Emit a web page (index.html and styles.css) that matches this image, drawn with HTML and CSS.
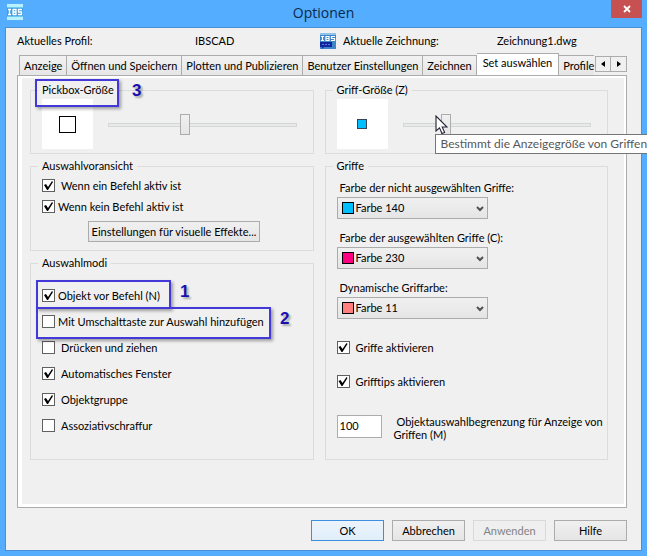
FILE: index.html
```html
<!DOCTYPE html>
<html lang="de">
<head>
<meta charset="utf-8">
<title>Optionen</title>
<link rel="stylesheet" href="styles.css">
</head>
<body>
<div class="window">
  <header class="titlebar">
    <svg class="app-icon" width="16" height="16" viewBox="0 0 16 16" aria-hidden="true">
      <rect width="16" height="16" fill="#3f9fe0"/>
      <rect width="16" height="3" fill="#b8f0fb"/>
      <rect y="3" width="16" height="1" fill="#6cc6ee"/>
      <rect y="12" width="16" height="1" fill="#6cc6ee"/>
      <rect y="13" width="16" height="3" fill="#b8f0fb"/>
      <path d="M1 5.500h3M2.500 5v6M1 10.500h3M6 5v6M6 5.500h3v2.500h-3M9 8v2.500h-3M15 5.500h-3.500v2.500h3v2.500h-3.500" fill="none" stroke="#fff" stroke-width="1.300"/>
    </svg>
    <h1 class="title">Optionen</h1>
    <button class="close" type="button" aria-label="Schließen">
      <svg width="8" height="8" viewBox="0 0 8 8"><path d="M1 1l6 6M7 1l-6 6" stroke="#fff" stroke-width="1.800"/></svg>
    </button>
  </header>

  <main class="client">
    <div class="info">
      <span>Aktuelles Profil:</span>
      <span>IBSCAD</span>
      <span class="drawing">
        <svg width="16" height="16" viewBox="0 0 16 16" aria-hidden="true">
          <rect width="16" height="16" fill="#3f86c9"/>
          <rect width="16" height="2" fill="#8fc4e8"/>
          <path d="M1 3.500h3M2.500 3v5M1 7.500h3M6 3v5M6 3.500h3v2h-3M9 5.500v2h-3M15 3.500h-3.500v2h3v2h-3.500" fill="none" stroke="#fff" stroke-width="1.200"/>
          <path d="M0 9h12v5h-8l-2 2v-2h-2z" fill="#1226a0"/>
          <path d="M2 11.500h2M5 11.500h2M8 11.500h2" stroke="#4f7fe0"/>
        </svg>
        Aktuelle Zeichnung:
      </span>
      <span>Zeichnung1.dwg</span>
    </div>

    <div class="tabs">
      <div class="tablist" role="tablist">
        <button class="tab" type="button" role="tab">Anzeige</button>
        <button class="tab" type="button" role="tab">Öffnen und Speichern</button>
        <button class="tab" type="button" role="tab">Plotten und Publizieren</button>
        <button class="tab" type="button" role="tab">Benutzer Einstellungen</button>
        <button class="tab" type="button" role="tab">Zeichnen</button>
        <button class="tab tab-active" type="button" role="tab" aria-selected="true">Set auswählen</button>
        <button class="tab tab-last" type="button" role="tab">Profile</button>
      </div>
      <button class="scroll" type="button" aria-label="Zurück"><svg width="4" height="6" viewBox="0 0 4 6"><path d="M4 0v6L0 3z"/></svg></button>
      <button class="scroll" type="button" aria-label="Weiter"><svg width="4" height="6" viewBox="0 0 4 6"><path d="M0 0v6l4-3z"/></svg></button>
    </div>

    <div class="panel" role="tabpanel">
      <div class="column">
        <fieldset class="group size-group">
          <legend>Pickbox-Größe</legend>
          <div class="preview"><div class="pickbox"></div></div>
          <div class="slider"><input type="range" min="0" max="100" value="40" aria-label="Pickbox-Größe"></div>
          <div class="callout callout-pickbox"><b>3</b></div>
        </fieldset>

        <fieldset class="group preview-group">
          <legend>Auswahlvoransicht</legend>
          <label class="check check-wide"><input type="checkbox" checked>Wenn ein Befehl aktiv ist</label>
          <label class="check"><input type="checkbox" checked>Wenn kein Befehl aktiv ist</label>
          <button class="button effects" type="button">Einstellungen für visuelle Effekte...</button>
        </fieldset>

        <fieldset class="group modes-group">
          <legend>Auswahlmodi</legend>
          <label class="check"><input type="checkbox" checked>Objekt vor Befehl (N)</label>
          <label class="check"><input type="checkbox">Mit Umschalttaste zur Auswahl hinzufügen</label>
          <label class="check check-wide"><input type="checkbox">Drücken und ziehen</label>
          <label class="check check-wide"><input type="checkbox" checked>Automatisches Fenster</label>
          <label class="check check-wide"><input type="checkbox" checked>Objektgruppe</label>
          <label class="check check-wide"><input type="checkbox">Assoziativschraffur</label>
          <div class="callout callout-noun"><b>1</b></div>
          <div class="callout callout-shift"><b>2</b></div>
        </fieldset>
      </div>

      <div class="column">
        <fieldset class="group size-group">
          <legend>Griff-Größe (Z)</legend>
          <div class="preview"><div class="grip"></div></div>
          <div class="slider">
            <input type="range" min="0" max="100" value="21" aria-label="Griff-Größe">
            <div class="tooltip" role="tooltip">Bestimmt die Anzeigegröße von Griffen</div>
            <svg class="cursor" width="13" height="20" viewBox="0 0 13 20" aria-hidden="true"><path d="M1 1v15l3.500-3.200L7 18.500l2.600-1.100L7.200 12H12z" fill="#fff" stroke="#223" stroke-width="1.100"/></svg>
          </div>
        </fieldset>

        <fieldset class="group grips-group">
          <legend>Griffe</legend>
          <div class="field">
            <label for="unselected">Farbe der nicht ausgewählten Griffe:</label>
            <div class="combo">
              <select id="unselected"><option>Farbe 140</option></select>
              <i class="swatch blue"></i>
              <svg class="chevron" width="8" height="6" viewBox="0 0 8 6"><path d="M1 1l3 3 3-3" fill="none" stroke="#505050" stroke-width="2"/></svg>
            </div>
          </div>
          <div class="field">
            <label for="selected">Farbe der ausgewählten Griffe (C):</label>
            <div class="combo">
              <select id="selected"><option>Farbe 230</option></select>
              <i class="swatch pink"></i>
              <svg class="chevron" width="8" height="6" viewBox="0 0 8 6"><path d="M1 1l3 3 3-3" fill="none" stroke="#505050" stroke-width="2"/></svg>
            </div>
          </div>
          <div class="field">
            <label for="dynamic">Dynamische Griffarbe:</label>
            <div class="combo">
              <select id="dynamic"><option>Farbe 11</option></select>
              <i class="swatch salmon"></i>
              <svg class="chevron" width="8" height="6" viewBox="0 0 8 6"><path d="M1 1l3 3 3-3" fill="none" stroke="#505050" stroke-width="2"/></svg>
            </div>
          </div>
          <div class="grip-checks">
            <label class="check check-wide"><input type="checkbox" checked>Griffe aktivieren</label>
            <label class="check check-wide"><input type="checkbox" checked>Grifftips aktivieren</label>
          </div>
          <div class="limit">
            <input id="limit" type="text" value="100">
            <label for="limit">Objektauswahlbegrenzung für Anzeige von Griffen (M)</label>
          </div>
        </fieldset>
      </div>
    </div>

    <footer class="actions">
      <button class="button button-default" type="button">OK</button>
      <button class="button" type="button">Abbrechen</button>
      <button class="button" type="button" disabled>Anwenden</button>
      <button class="button" type="button">Hilfe</button>
    </footer>
  </main>
</div>
</body>
</html>
```

FILE: styles.css
```css
* {
  box-sizing: border-box;
}

body {
  margin: 0;
  font: 11px/14px Lato, "Liberation Sans", sans-serif;
  color: #000;
}

button,
input,
select {
  font: inherit;
  color: inherit;
  margin: 0;
  border-radius: 0;
}

.window {
  display: flex;
  flex-direction: column;
  min-height: 100vh;
  padding: 0 5px 5px;
  background: #54adff;
  overflow: hidden;
}

.titlebar {
  display: grid;
  grid-template-columns: 1fr auto 1fr;
  height: 27px;
}

.app-icon {
  margin: 4px 2px;
}

.title {
  margin: 0;
  font: 14px/25px "Open Sans", sans-serif;
  color: #0b2a4a;
}

.close {
  justify-self: end;
  display: flex;
  align-items: center;
  justify-content: center;
  width: 31px;
  height: 18px;
  padding: 0;
  border: 0;
  background: #c75050;
}

.client {
  flex: 1;
  padding: 4px 14px 8px 11px;
  border: 1px solid #4a90d2;
  background: #f0f0f0;
}

.info {
  display: grid;
  grid-template-columns: 178fr 125fr 177fr 130fr;
  align-items: center;
  height: 18px;
}

.drawing {
  display: flex;
  align-items: center;
  gap: 7px;
}

.tabs {
  display: flex;
  align-items: flex-end;
  height: 25px;
  padding-left: 2px;
}

.tablist {
  flex: 1;
  display: flex;
  align-items: flex-end;
  min-width: 0;
  overflow: hidden;
}

.tab {
  flex: none;
  height: 20px;
  padding: 0 4px;
  border: 1px solid #acacac;
  border-width: 1px 1px 0 0;
  background: linear-gradient(#f2f2f2, #e6e6e6);
  white-space: nowrap;
}

.tab:first-child {
  border-left-width: 1px;
}

.tab-active {
  height: 22px;
  padding: 0 6px 3px;
  background: #fff;
}

.tab-last {
  padding-right: 0;
  border-right: 0;
}

.scroll {
  display: flex;
  align-items: center;
  justify-content: center;
  width: 16px;
  height: 16px;
  margin-bottom: 3px;
  padding: 0;
  border: 1px solid #acacac;
  background: #f0f0f0;
}

.scroll + .scroll {
  border-left: 0;
}

.panel {
  display: grid;
  grid-template-columns: 1fr 1fr;
  gap: 11px;
  padding: 7px 18px 47px 12px;
  border: 1px solid #acacac;
  box-shadow: inset 4px 2px #fff, inset -2px -3px #fff;
}

.column {
  display: flex;
  flex-direction: column;
  gap: 5px;
  min-width: 0;
}

.group {
  position: relative;
  min-width: 0;
  margin: 0;
  padding: 0 11px;
  border: 1px solid #dcdcdc;
}

legend {
  margin-left: -4px;
  padding: 0 4px;
}

.size-group {
  padding-top: 2px;
  padding-bottom: 4px;
  display: flex;
  align-items: flex-end;
  gap: 15px;
}

.preview {
  display: flex;
  align-items: center;
  justify-content: center;
  width: 51px;
  height: 50px;
  background: #fff;
}

.pickbox {
  width: 17px;
  height: 17px;
  border: 1px solid #000;
}

.grip {
  width: 10px;
  height: 10px;
  border: 1px solid #345;
  background: #00bfff;
}

.slider {
  position: relative;
  flex: 1;
  display: flex;
  padding: 0 5px 14px 0;
}

input[type="range"] {
  appearance: none;
  width: 100%;
  height: 21px;
  background: transparent;
}

input[type="range"]::-webkit-slider-runnable-track {
  height: 4px;
  border: 1px solid #d6d6d6;
  background: #e7eaea;
}

input[type="range"]::-webkit-slider-thumb {
  appearance: none;
  width: 10px;
  height: 21px;
  margin-top: -10px;
  border: 1px solid #acacac;
  background: linear-gradient(#f0f0f0, #e5e5e5);
}

.tooltip {
  position: absolute;
  z-index: 2;
  top: 20px;
  left: 32px;
  padding: 0 5px;
  border: 1px solid #767676;
  background: #fff;
  color: #575757;
  font: 12px/18px Lato, sans-serif;
  white-space: nowrap;
}

.cursor {
  position: absolute;
  z-index: 3;
  top: 1px;
  left: 32px;
}

.check {
  display: flex;
  align-items: center;
  gap: 3px;
  height: 13px;
}

.check-wide {
  gap: 6px;
}

.check input {
  appearance: none;
  width: 13px;
  height: 13px;
  border: 1px solid #606060;
  background: #fff;
}

.check input:checked::before {
  content: "";
  display: block;
  width: 11px;
  height: 11px;
  background: #000;
  clip-path: polygon(1px 5px, 3px 4px, 5px 7px, 9px 1px, 10px 2px, 5px 10px, 4px 10px);
}

.preview-group,
.modes-group {
  display: flex;
  flex-direction: column;
}

.preview-group {
  gap: 8px;
  padding-top: 6px;
  padding-bottom: 8px;
}

.modes-group {
  gap: 13px;
  padding-top: 19px;
  padding-bottom: 27px;
}

.button {
  width: 73px;
  height: 21px;
  padding: 0;
  border: 1px solid #acacac;
  background: linear-gradient(#f0f0f0, #e5e5e5);
  white-space: nowrap;
}

.button-default {
  border-color: #3c8fdc;
  background: linear-gradient(#ecf4fc, #e0eefa);
}

.button:disabled {
  border-color: #d9d9d9;
  background: #efefef;
  color: #838383;
}

.effects {
  width: 172px;
  margin-left: 46px;
}

.field {
  display: flex;
  flex-direction: column;
  gap: 2px;
}

.field label {
  padding-left: 3px;
}

.combo {
  position: relative;
  width: 151px;
}

select {
  appearance: none;
  display: block;
  width: 100%;
  height: 22px;
  padding: 0 18px;
  border: 1px solid #acacac;
  background: linear-gradient(#f0f0f0, #e5e5e5);
}

.swatch {
  position: absolute;
  top: 5px;
  left: 5px;
  width: 12px;
  height: 12px;
  border: 1px solid #000;
}

.blue {
  background: #00bfff;
}

.pink {
  background: #ff0080;
}

.salmon {
  background: #ff7f7f;
}

.chevron {
  position: absolute;
  top: 9px;
  right: 4px;
}

.grips-group {
  display: flex;
  flex-direction: column;
  gap: 12px;
  flex: 1;
  padding-top: 8px;
}

.grip-checks {
  display: flex;
  flex-direction: column;
  gap: 21px;
  padding: 10px 0 15px;
}

.limit {
  display: flex;
  gap: 12px;
}

.limit input {
  width: 45px;
  height: 23px;
  padding: 0 2px 3px;
  border: 1px solid #acacac;
  background: #fff;
}

.limit label {
  flex: 1;
  margin-right: -11px;
  line-height: 13px;
  text-indent: 3px;
}

.callout {
  position: absolute;
  border: 2px solid #4338d8;
  box-shadow: 2px 2px 3px rgba(0, 0, 0, 0.35);
}

.callout b {
  position: absolute;
  left: 100%;
  margin-left: 11px;
  color: #1a10b0;
  font: bold 17px/20px "Liberation Sans", sans-serif;
  text-shadow: 2px 2px 2px rgba(0, 0, 0, 0.3);
}

.callout-pickbox {
  top: -18px;
  left: 4px;
  width: 84px;
  height: 28px;
}

.callout-pickbox b {
  margin-left: 15px;
}

.callout-noun {
  top: 10px;
  left: 5px;
  width: 135px;
  height: 29px;
}

.callout-shift {
  top: 37px;
  left: 5px;
  width: 235px;
  height: 32px;
}

.actions {
  display: flex;
  justify-content: flex-end;
  gap: 8px;
  padding-top: 12px;
}
```
